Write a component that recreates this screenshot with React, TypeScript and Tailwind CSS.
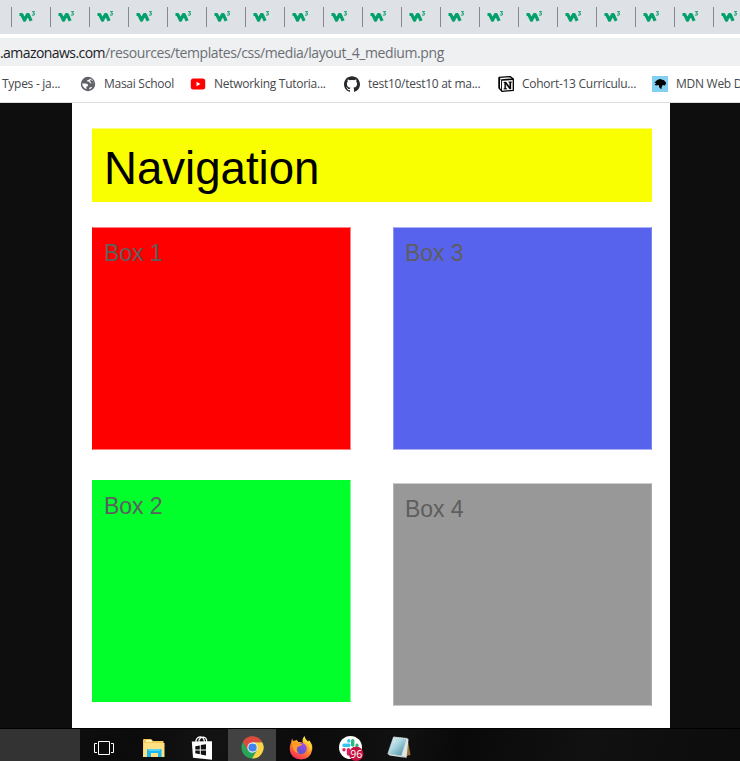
import React from "react";
import { SiGithub } from "react-icons/si";

const W3 = () => (
  <svg className="block shrink-0" width="17" height="13" viewBox="0 0 17 13">
    <path d="M.5 4.5H2.7L5.5 10.2 8.3 4.7H9.3L12.1 10.9" fill="none" stroke="#04a06c" strokeWidth="3.2" strokeLinejoin="round" />
    <path d="M13.1 1.5H15.3L14.3 2.9Q15.8 3 15.5 4.2 15 5.5 13 5" fill="none" stroke="#25a97c" strokeWidth="1.1" />
  </svg>
);

const Globe = () => (
  <svg className="block shrink-0" width="16" height="16" viewBox="0 0 16 16">
    <circle cx="8" cy="8" r="7.2" fill="#5f6368" />
    <path d="M2.2 7.6H5.6Q8 7.6 8.2 9.6 8 10.6 6.4 10.6V13.2Q2.6 12 2.2 7.6ZM10.2 2.6Q9.8 4 8 4 6.6 4.2 7.2 5.6H9Q9.4 7.4 11 7.4L13.8 7.2Q13.2 3.8 10.2 2.6ZM9 13.6 9.6 11.4 12.4 10.8Q11.4 13 9 13.6Z" fill="#fff" />
    <path d="M10 3.4 13.4 5.2 13.8 7.4 11.8 8 10.4 5.8Z" fill="#5f6368" />
  </svg>
);

const YouTube = () => (
  <svg className="block shrink-0" width="16" height="16" viewBox="0 0 16 16">
    <rect x=".8" y="2.5" width="14.4" height="11" rx="2.5" fill="#f00" />
    <path d="M6.5 5.7V10.3L10.4 8Z" fill="#fff" />
  </svg>
);

const Notion = () => (
  <svg className="block shrink-0" width="16" height="16" viewBox="0 0 16 16">
    <path d="M1 1.4 12.2.6 15.3 3V14.4L4 15.3 1 12Z" fill="#fff" stroke="#000" strokeWidth="1.3" strokeLinejoin="round" />
    <path d="M.8 1.4 4 4V15.4L.8 12Z" fill="#000" />
    <path d="M2 3V12L3.1 13.4V4Z" fill="#fff" />
    <path d="M3.5 4 15.4 3.1" stroke="#000" strokeWidth="1.7" />
    <path d="M5.8 6H8.1L11.6 10.7V6.7L10.7 6.4V5.7H13.7V6.3L13 6.7V13H11.5L7.8 8.1V12.2L8.8 12.6V13.2H5.8V12.6L6.6 12.2V6.9L5.8 6.6Z" fill="#000" stroke="#000" strokeWidth=".3" />
  </svg>
);

const Mdn = () => (
  <svg className="block shrink-0" width="16" height="16" viewBox="0 0 16 16">
    <path fill="#83d0f2" d="M0 0H16V16H0Z" />
    <path d="M2.5 6.5 5.2 4 8 3 12 4.2 14.2 7.1 13 9.4 10.7 9 9.7 11 9.3 13.3 7.3 11.5 6.7 9 3.8 9.5 2.5 8.2 4.3 7.6Z" fill="#000" />
  </svg>
);

const TaskView = () => (
  <svg className="block" width="20" height="16" viewBox="0 0 20 16" fill="none" stroke="#fff">
    <path d="M4.5 1.5H15.5V14.5H4.5ZM3 3.5H.5V12.5H3M17 3.5H19.5V12.5H17" />
  </svg>
);
const Folder = () => (
  <svg className="block" width="22" height="20" viewBox="0 0 22 20">
    <path d="M0 1Q0 0 1 0H8L10 2H20.5V18H0Z" fill="#f7ca58" />
    <path d="M3 1H9V3H3Z" fill="#fff3b8" />
    <path d="M1 4H21.5V18H0Z" fill="#ffe083" />
    <path d="M4 10H18.5V18H15V14H8V18H4Z" fill="#1db7ed" />
    <path d="M4 10H18.5L16 12H6Z" fill="#54d2f8" />
  </svg>
);
const Store = () => (
  <svg className="block" width="22" height="25" viewBox="0 0 22 25">
    <path d="M5 8V5.5Q5.8 2 9.5 1.8 13 2 13.5 7M8 7V5Q9.5 2 12 2 15 2.3 15.6 5V8" fill="none" stroke="#fff" strokeWidth="1.2" />
    <path d="M.8 6.6 21 6.2V24.7L2 22.8Z" fill="#fff" />
    <path d="M4.3 11.2 8.8 10.4V14.5H4.3ZM9.8 10.1 15 9.2V14.5H9.8ZM4.3 15.4H8.8V19.2L4.3 18.3ZM9.8 15.4H15V20.4L9.8 19.4Z" fill="#111" />
  </svg>
);
const Chrome = () => (
  <svg className="block" width="23" height="23" viewBox="0 0 24 24">
    <circle cx="12" cy="12" r="11.5" fill="#26a55b" />
    <path d="M12 6.4H22.1A11.5 11.5 0 0 1 11.6 23.5L16.8 14.8Z" fill="#ffd345" />
    <path d="M2 6.1 7.2 15H12V6.6H22.2A11.5 11.5 0 0 0 2 6.1Z" fill="#dd493d" />
    <circle cx="12" cy="12" r="5.4" fill="#f1f1f1" />
    <circle cx="12" cy="12" r="4.3" fill="#4285ed" />
  </svg>
);
const Firefox = () => (
  <svg className="block" width="24" height="25" viewBox="0 0 24 25">
    <defs>
      <linearGradient id="fire" x1=".8" y1="0" x2=".25" y2="1"><stop stopColor="#fff34a" /><stop offset=".45" stopColor="#ff9929" /><stop offset="1" stopColor="#f92259" /></linearGradient>
      <linearGradient id="orb" x1="1" y1="0" x2=".4" y2="1"><stop stopColor="#b147ee" /><stop offset="1" stopColor="#5654cc" /></linearGradient>
    </defs>
    <path d="M3 3.4 4.6 7 7.5 4.8 9.3 7.1Q11.5 6.6 14 8 12.3 4.8 15.5 1 16 4.2 19 6.5L20 5.3Q24 9.2 23.2 14.7 21.7 23.7 12 24.5 2.2 23.8.8 15.5.1 11.3 2.1 7.6Z" fill="url(#fire)" />
    <circle cx="12" cy="13.5" r="5.7" fill="url(#orb)" />
    <path d="M3 6 7.5 5.5 10 8.1 13.5 9.5 10.7 11.3 9 11.6Q6 15.3 10 18 5.1 17.5 4 13Z" fill="#ff9d23" />
    <path d="M15 2Q15.2 6.4 19.1 8.8 22.2 12 19.5 18L22.3 13Q21.1 8.2 18 6.5Z" fill="#ffdf32" />
  </svg>
);
const Slack = () => (
  <svg className="block" width="25" height="25" viewBox="0 0 25 25">
    <circle cx="11.5" cy="11.5" r="11.5" fill="#fff" />
    <g strokeWidth="3.4" strokeLinecap="round">
      <path d="M5 9.2H10M9.8 4.8V5" stroke="#36c5f0" />
      <path d="M13.7 4.8V9M18 9.2V9.3" stroke="#2eb67d" />
      <path d="M9.5 13.7V18M5 13.7V13.8" stroke="#e01e5a" />
      <path d="M14 13.7H18" stroke="#ecb22e" />
    </g>
    <circle cx="17.2" cy="17.8" r="7.2" fill="#c5123f" />
    <text x="17.2" y="21.6" textAnchor="middle" fontFamily="Open Sans, sans-serif" fontSize="10.5" fill="#fff">96</text>
  </svg>
);
const Notepad = () => (
  <svg className="block" width="24" height="23" viewBox="0 0 24 23">
    <defs><linearGradient id="paper" x1="0" y1="0" x2="1" y2="1"><stop stopColor="#f2f8f7" /><stop offset=".45" stopColor="#a7d3df" /><stop offset="1" stopColor="#357f98" /></linearGradient></defs>
    <path d="M20.5 2 23.5 19 19 20Z" fill="#98713d" />
    <path d="M18.5 2 21.5 3 19.5 22 14 20Z" fill="#dfe5df" />
    <path d="M6.5 1 20 2.4 14.5 20 .8 17.8Z" fill="url(#paper)" stroke="#d8e8e8" strokeWidth=".6" />
    <path d="M.8 17.8 14.5 20 18 21.7 2.6 19.5Z" fill="#d7e3e2" />
    <path d="M7 1.5 20 3" stroke="#d5d9d5" strokeWidth="1.5" strokeDasharray="1 1" />
  </svg>
);

const Bookmark = ({ icon, label, widths }: { icon: React.ReactNode; label: string; widths: string }) => (
  <div className={`flex shrink-0 items-center gap-2 ${widths}`}>{icon}<span className="whitespace-nowrap">{label}</span></div>
);

const Box = ({ label, color }: { label: string; color: string }) => (
  <div className={`w-[259px] border pl-[11px] pt-[11px] text-[23px] leading-[28px] tracking-[-0.08px] text-[#5e5e5e] ${color}`}>{label}</div>
);

export default function App() {
  return (
    <div className="flex h-[761px] w-[740px] flex-col overflow-hidden bg-white">
      <div className="flex h-[34px] shrink-0 overflow-hidden bg-[#dee1e6] pl-[11px]">
        {Array.from({ length: 19 }, (_, i) => (
          <div key={i} className="flex w-[39px] shrink-0 pt-[7px]">
            <div className="h-5 w-px shrink-0 bg-[#85898f]" />
            <div className="pl-[7px] pt-[3px]"><W3 /></div>
          </div>
        ))}
      </div>
      <div className="mt-1 flex h-7 shrink-0 items-center whitespace-nowrap bg-[#eff0f2] font-['Open_Sans',sans-serif] text-[14px] text-[#6b6f74]">
        <span className="tracking-[-0.56px] text-[#202124]">.amazonaws.com</span><span className="tracking-[-0.41px]">/resources/templates/css/media/layout_4_medium.png</span>
      </div>
      <div className="flex h-[37px] shrink-0 items-center overflow-hidden border-b border-[#dadce0] pl-[2px] font-['Open_Sans',sans-serif] text-[12px] tracking-[-0.27px] text-[#45484c]">
        <span className="w-[78px] shrink-0 whitespace-nowrap">Types - ja...</span>
        <Bookmark icon={<Globe />} label="Masai School" widths="w-[110px]" />
        <Bookmark icon={<YouTube />} label="Networking Tutoria..." widths="w-[154px]" />
        <Bookmark icon={<SiGithub size={16} className="shrink-0 text-[#24292e]" />} label="test10/test10 at ma..." widths="w-[154px]" />
        <Bookmark icon={<Notion />} label="Cohort-13 Curriculu..." widths="w-[154px]" />
        <Bookmark icon={<Mdn />} label="MDN Web D" widths="w-[130px]" />
      </div>
      <main className="h-[625px] shrink-0 bg-[#0e0e0e] pl-[72px] font-['Liberation_Sans',Arial,sans-serif]">
        <div className="h-full w-[598px] bg-white pl-5 pt-[25px]">
          <div className="h-[74px] w-[560px] border-t border-[#fbff80] bg-[#f9ff00] pl-3 pt-[13px] text-[45.6px] leading-[54px] text-black">Navigation</div>
          <div className="mt-[25px] flex gap-[42px]">
            <div className="flex flex-col gap-[30px]">
              <Box label="Box 1" color="h-[223px] border-[#ff8080] border-l-[#ff0000] bg-[#ff0000]" />
              <Box label="Box 2" color="h-[222px] border-[#00ff2b] border-r-[#80ff95] bg-[#00ff2b]" />
            </div>
            <div className="flex flex-col gap-[33px]">
              <Box label="Box 3" color="h-[223px] border-[#abb2f6] border-l-[#8b94f2] border-r-[#7882ef] bg-[#5763ed]" />
              <Box label="Box 4" color="h-[223px] border-[#cccccc] border-l-[#b5b5b5] border-r-[#a8a8a8] bg-[#989898]" />
            </div>
          </div>
        </div>
      </main>
      <footer className="flex h-[33px] shrink-0 border-t border-black bg-[linear-gradient(105deg,#111_0%,#0b0b0b_18%,#131313_29%,#0b0b0b_41%,#111_54%,#090909_62%,#111_79%,#0c0c0c_100%)]">
        <div className="h-full w-20 bg-[#333]" />
        <div className="ml-[14px] mt-[11px] w-[49px]"><TaskView /></div>
        <div className="mt-[10px] w-[48px]"><Folder /></div>
        <div className="mt-[6px] w-[37px]"><Store /></div>
        <div className="h-full w-12 bg-[#424242] pl-[13px] pt-[7px]"><Chrome /></div>
        <div className="ml-[13px] mt-[6px] w-[50px]"><Firefox /></div>
        <div className="mt-[7px] w-[48px]"><Slack /></div>
        <div className="mt-[7px]"><Notepad /></div>
      </footer>
    </div>
  );
}
